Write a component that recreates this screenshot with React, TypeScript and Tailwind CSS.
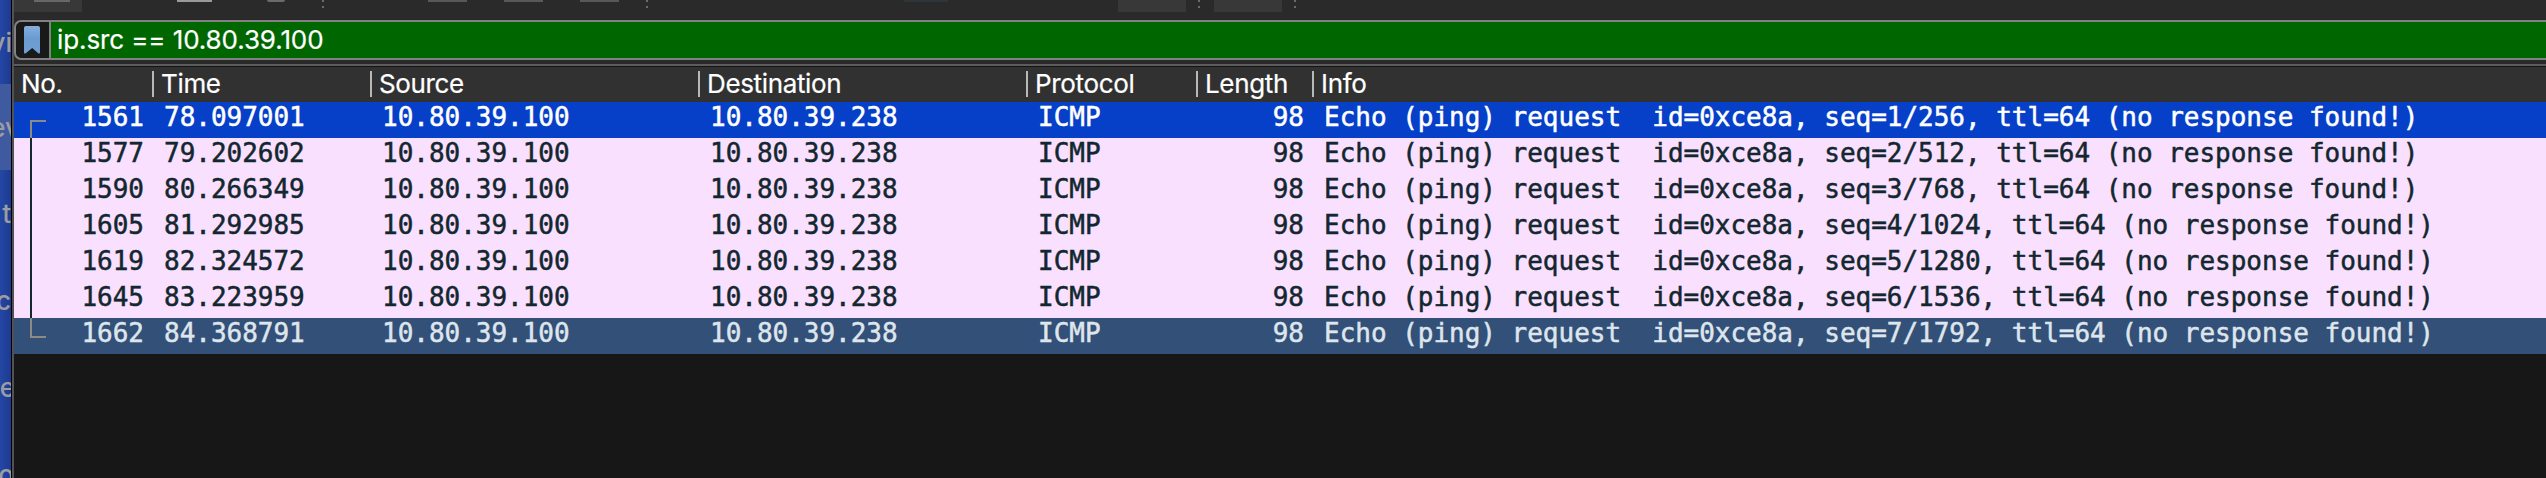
import React from "react";

const packets = [
  ["1561", "78.097001", "1/256"],
  ["1577", "79.202602", "2/512"],
  ["1590", "80.266349", "3/768"],
  ["1605", "81.292985", "4/1024"],
  ["1619", "82.324572", "5/1280"],
  ["1645", "83.223959", "6/1536"],
  ["1662", "84.368791", "7/1792"],
];

const columns = [
  { label: "No.", cls: "w-[138px] pl-[7px]" },
  { label: "Time", cls: "w-[218px] pl-[9px]" },
  { label: "Source", cls: "w-[328px] pl-[9px]" },
  { label: "Destination", cls: "w-[328px] pl-[9px]" },
  { label: "Protocol", cls: "w-[170px] pl-[9px]" },
  { label: "Length", cls: "w-[116px] pl-[9px]" },
  { label: "Info", cls: "flex-1 pl-[9px]" },
];

function Dots() {
  return (
    <div className="flex w-[2px] flex-col gap-1">
      <div className="h-[2px] bg-[#6b6b6b]" />
      <div className="h-[2px] bg-[#6b6b6b]" />
    </div>
  );
}

function Toolbar() {
  return (
    <div className="flex h-5 shrink-0 items-start border-b border-[#2b2428] bg-[#2a2a2a]">
      <div className="flex h-3 w-[68px] items-start bg-[#383838] pl-[20px]">
        <div className="h-[2px] w-[36px] bg-[#676767]" />
      </div>
      <div className="ml-[95px] h-[2px] w-[35px] bg-[#9a9a9a]" />
      <div className="ml-[55px] h-[2px] w-[18px] rounded-b-full bg-[#6a6a6a]" />
      <div className="ml-[37px]"><Dots /></div>
      <div className="ml-[104px] h-[2px] w-[39px] bg-[#585858]" />
      <div className="ml-[37px] h-[2px] w-[39px] bg-[#585858]" />
      <div className="ml-[37px] h-[2px] w-[39px] bg-[#585858]" />
      <div className="ml-[27px]"><Dots /></div>
      <div className="ml-[256px] h-[2px] w-[44px] bg-[#2d363b]" />
      <div className="ml-[170px] h-3 w-[68px] bg-[#383838]" />
      <div className="ml-[12px]"><Dots /></div>
      <div className="ml-[14px] h-3 w-[68px] bg-[#383838]" />
      <div className="ml-[12px]"><Dots /></div>
    </div>
  );
}

function FilterBar() {
  return (
    <div className="h-11 shrink-0 bg-[#2a2a2a]">
      <div className="flex h-10 overflow-hidden rounded-l-[7px] border-y-2 border-l-2 border-[#818181] bg-[#191919]">
        <div className="flex w-[35px] shrink-0 border-r-2 border-[#818181] pl-[8px] pt-[4px]">
          <svg width="16" height="28" viewBox="0 0 16 28">
            <defs>
              <linearGradient id="mark" x1="0" y1="0" x2="0" y2="1">
                <stop offset="0" stopColor="#86afdc" />
                <stop offset="0.45" stopColor="#6b9bd3" />
                <stop offset="1" stopColor="#719fd5" />
              </linearGradient>
            </defs>
            <path d="M2 0H14Q16 0 16 2V26.5Q16 28 14.5 27.4L8.2 22L1.5 27.4Q0 28 0 26.5V2Q0 0 2 0Z" fill="url(#mark)" />
          </svg>
        </div>
        <div className="flex-1 whitespace-pre bg-[#006600] pl-[6px] font-['Inter',sans-serif] text-[26px] leading-[36px] tracking-[-0.1px] text-white [-webkit-text-stroke:0.2px_currentColor]">
          ip.src == 10.80.39.100
        </div>
      </div>
    </div>
  );
}

function Header() {
  return (
    <div className="flex h-[38px] shrink-0 border-t-2 border-[#5c5c5c] bg-[#313131] shadow-[inset_0_1px_0_#151515]">
      {columns.map((c, i) => (
        <div key={c.label} className="relative flex shrink-0 pt-[5px] last:flex-1">
          {i > 0 && <div className="absolute left-0 top-[5px] h-[26px] w-[2px] bg-[#b8b8b8]" />}
          <div className={"shrink-0 font-['Inter',sans-serif] text-[26px] leading-[26px] tracking-[-0.35px] text-white [-webkit-text-stroke:0.2px_currentColor] " + c.cls}>{c.label}</div>
        </div>
      ))}
    </div>
  );
}

function Bracket({ index }: { index: number }) {
  if (index === 0)
    return <div className="mt-[18px] ml-[16px] h-[18px] w-[16px] border-l-2 border-t-2 border-[#8e8a86]" />;
  if (index === packets.length - 1)
    return <div className="ml-[16px] h-[20px] w-[16px] border-b-2 border-l-2 border-[#8e8a86]" />;
  return <div className="ml-[16px] h-9 w-[16px] border-l-2 border-[#12272e]" />;
}

function Row({ p, index }: { p: string[]; index: number }) {
  const tone =
    index === 0
      ? "bg-[#0640c8] text-white"
      : index === packets.length - 1
        ? "bg-[#325078] text-[#dfe5ec]"
        : "bg-[#fae0ff] text-[#12272e]";
  return (
    <div
      className={
        "flex h-9 shrink-0 whitespace-pre font-['DejaVu_Sans_Mono',monospace] text-[26px] leading-[30px] tracking-[-0.02px] [-webkit-text-stroke:0.5px_currentColor] " + tone
      }
    >
      <div className="w-[32px] shrink-0"><Bracket index={index} /></div>
      <div className="w-[98px] shrink-0 text-right">{p[0]}</div>
      <div className="w-[218px] shrink-0 pl-[20px]">{p[1]}</div>
      <div className="w-[328px] shrink-0 pl-[20px]">10.80.39.100</div>
      <div className="w-[328px] shrink-0 pl-[20px]">10.80.39.238</div>
      <div className="w-[170px] shrink-0 pl-[20px]">ICMP</div>
      <div className="w-[116px] shrink-0 text-right">98</div>
      <div className="pl-[20px]">{"Echo (ping) request  id=0xce8a, seq=" + p[2] + ", ttl=64 (no response found!)"}</div>
    </div>
  );
}

function Backdrop() {
  const line = "flex h-[87px] shrink-0 items-center justify-end ";
  return (
    <div className="flex w-[11px] shrink-0 flex-col overflow-hidden bg-linear-to-r from-[#2447a5] to-[#1d3a91] font-['Inter',sans-serif] text-[26px] font-medium text-[#9b9da3]">
      <div className="flex h-[84px] shrink-0 items-center justify-end"><span className="-mr-px">vi</span></div>
      <div className="flex h-[86px] shrink-0 items-center justify-end bg-[#405a9f]"><span className="mr-[-9px]">ev</span></div>
      <div className={line}><span>t</span></div>
      <div className={line}><span>c</span></div>
      <div className={line}><span className="mr-[-4px]">te</span></div>
      <div className={line}><span className="mr-[-3px]">o</span></div>
    </div>
  );
}

export default function App() {
  return (
    <div className="flex h-[478px] w-full overflow-hidden bg-[#171717]">
      <Backdrop />
      <div className="w-px shrink-0 bg-black" />
      <div className="w-[2px] shrink-0 bg-[#525252]" />
      <div className="flex min-w-0 flex-1 flex-col overflow-hidden">
        <Toolbar />
        <FilterBar />
        <Header />
        {packets.map((p, i) => (
          <Row key={p[0]} p={p} index={i} />
        ))}
      </div>
    </div>
  );
}
